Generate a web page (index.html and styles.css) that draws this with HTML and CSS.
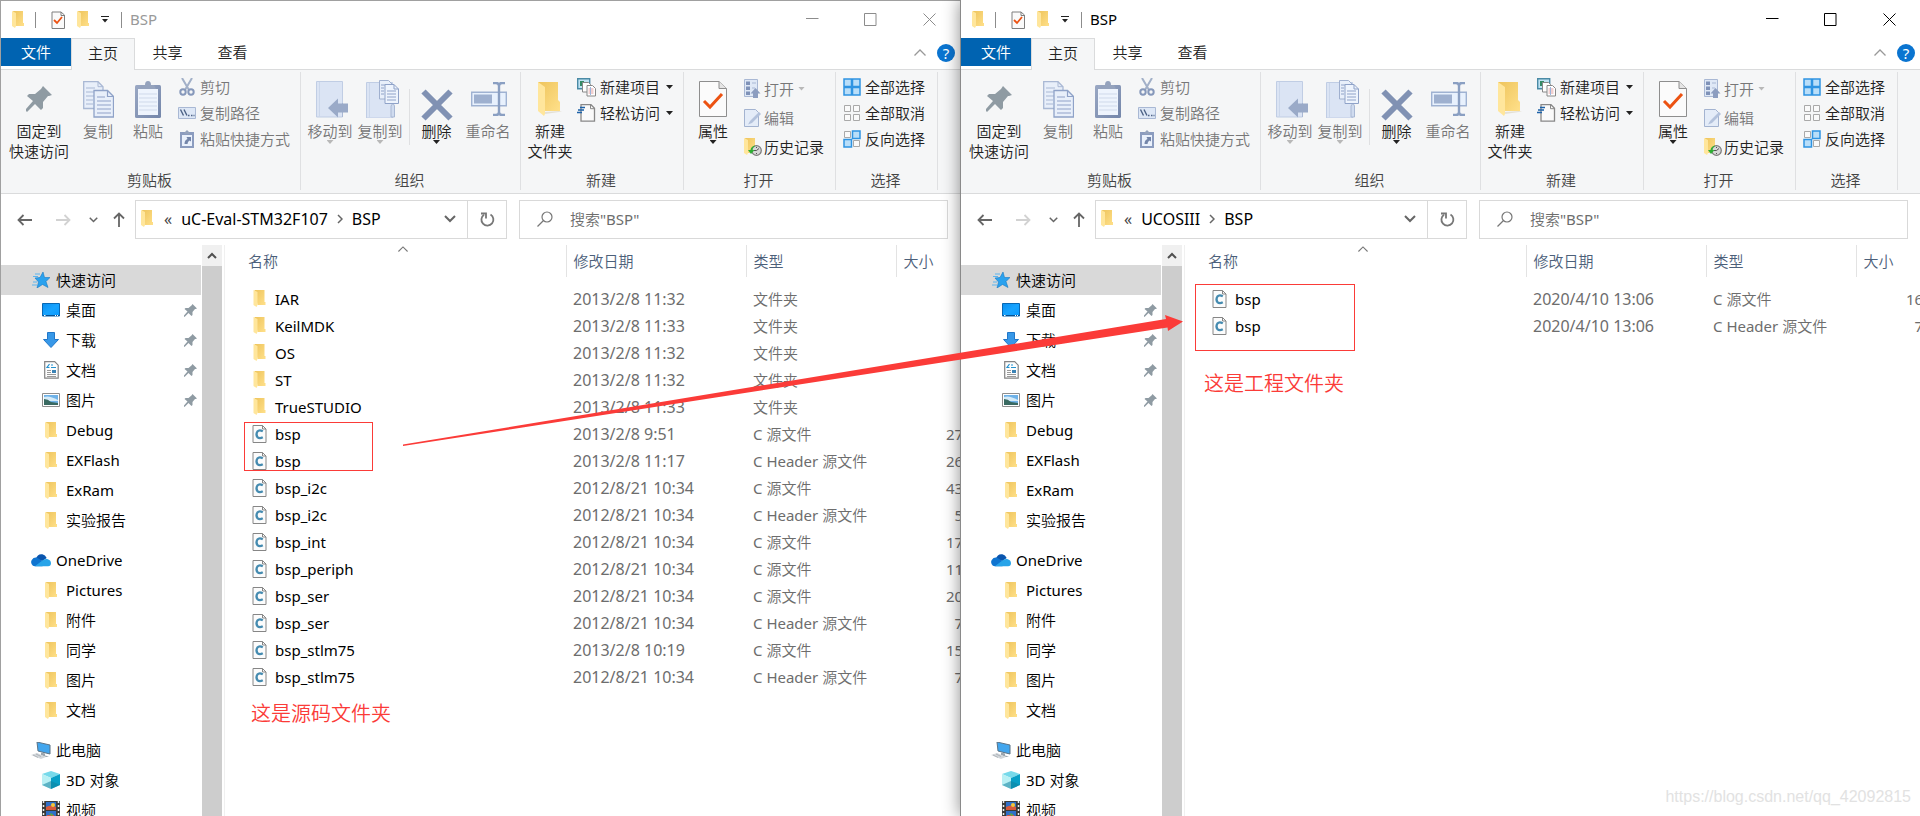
FILE: index.html
```html
<!DOCTYPE html>
<html lang="zh-CN">
<head>
<meta charset="utf-8">
<title>BSP</title>
<link rel="stylesheet" href="styles.css">
</head>
<body>
<svg class="sprite" aria-hidden="true">
  <defs>
    <linearGradient id="gold" x1="0" x2="1" y1="0" y2="1"><stop offset="0" stop-color="#eec45c"/><stop offset="1" stop-color="#ffe08a"/></linearGradient>
    <linearGradient id="sky" x1="0" x2="1" y1="0" y2="1"><stop offset="0" stop-color="#0a8ff0"/><stop offset=".5" stop-color="#18a4ff"/><stop offset="1" stop-color="#0a9aff"/></linearGradient>
    <linearGradient id="slate" x1="0" x2="1" y1="0" y2="1"><stop offset="0" stop-color="#9aa8c4"/><stop offset="1" stop-color="#7486aa"/></linearGradient>
  </defs>
  <symbol id="folder" viewBox="0 0 12 17"><path d="M1 0h10v12l1 0v3H4z" fill="url(#gold)"/><path d="M0 0l4 2v13l-1 2-3-2z" fill="#ffe69c"/></symbol>
  <symbol id="folder-big" viewBox="0 0 26 36"><path d="M1 1h20v18l2 2v9H8z" fill="url(#gold)"/><path d="M1 1l7 5v27l-1 2-6-5z" fill="#ffe69c"/><path d="M8 33l14-2 3-1h-2l-15 1z" fill="#e4e0d4"/></symbol>
  <symbol id="check-doc" viewBox="0 0 28 36"><path d="M.5.5H20l7.500 7V35.500H.5z" fill="#fbfbfb" stroke="#8e8e8e"/><path d="M20 .5v7h7.500" fill="#e4e4e4" stroke="#8e8e8e"/><path d="M5 20l6 6 12-13" fill="none" stroke="#ec5212" stroke-width="3"/></symbol>
  <symbol id="check-doc-small" viewBox="0 0 14 18"><path d="M1 1h9l3.500 3v13.500H1z" fill="#fafafa" stroke="#7e7e7e" stroke-width="1"/><path d="M10 1v3.500h3.500" fill="none" stroke="#7e7e7e"/><path d="M3 9l3 3 5-6" fill="none" stroke="#ec5212" stroke-width="1.800"/></symbol>
  <symbol id="qat-drop" viewBox="0 0 8 7"><path d="M0 .5h8" stroke="#222"/><path d="M1 3h6L4 6.500z" fill="#222"/></symbol>
  <symbol id="min" viewBox="0 0 13 13"><path d="M0 5.500h12.500" stroke="currentColor"/></symbol>
  <symbol id="max" viewBox="0 0 13 13"><path d="M.5.500h11.500v12H.5z" fill="none" stroke="currentColor"/></symbol>
  <symbol id="close" viewBox="0 0 13 13"><path d="M.5.500l12 12M12.500.500l-12 12" stroke="currentColor"/></symbol>
  <symbol id="chev-up" viewBox="0 0 12 7"><path d="M.5 6.500L6 1l5.500 5.500" fill="none" stroke="currentColor" stroke-width="1.300"/></symbol>
  <symbol id="scroll-up" viewBox="0 0 10 7"><path d="M1 6l4-4 4 4" fill="none" stroke="currentColor" stroke-width="2"/></symbol>
  <symbol id="chev-down" viewBox="0 0 12 8"><path d="M1 1l5 5 5-5" fill="none" stroke="currentColor" stroke-width="2"/></symbol>
  <symbol id="chev-right" viewBox="0 0 6 10"><path d="M1 1l4 4-4 4" fill="none" stroke="currentColor" stroke-width="1.500"/></symbol>
  <symbol id="back" viewBox="0 0 15 12"><path d="M15 6H1.500M6.500 1l-5 5 5 5" fill="none" stroke="currentColor" stroke-width="1.800"/></symbol>
  <symbol id="forward" viewBox="0 0 15 12"><path d="M0 6h13.500M8.500 1l5 5-5 5" fill="none" stroke="currentColor" stroke-width="1.800"/></symbol>
  <symbol id="up" viewBox="0 0 12 15"><path d="M6 15V1.500M1 6.500l5-5 5 5" fill="none" stroke="currentColor" stroke-width="1.800"/></symbol>
  <symbol id="refresh" viewBox="0 0 15 15"><path d="M10.500 2.500A6 6 0 1 1 4 2.700" fill="none" stroke="#777" stroke-width="1.800"/><path d="M1 1.500h5v5" fill="none" stroke="#777" stroke-width="1.800"/></symbol>
  <symbol id="search" viewBox="0 0 16 16"><circle cx="10" cy="6" r="5" fill="none" stroke="#777" stroke-width="1.200"/><path d="M6.500 9.500L.5 15.500" stroke="#777" stroke-width="1.300"/></symbol>
  <symbol id="pin" viewBox="0 0 26 26"><path d="M17 0l9 9-3 1-1 0-5 6 0 6-2 2-6-6-8 8-1-1 0-2 7-8-6-5 2-2h6l6-5z" fill="#8f9ba3"/></symbol>
  <symbol id="copy" viewBox="0 0 31 37"><path d="M.7.700H15l5 5V27.500H.7z" fill="#e8effa" stroke="#a9b8d4" stroke-width="1.300"/><path d="M15 .7v5h5M3 7h9M3 11h9M3 15h9M3 19h7M3 23h7" fill="none" stroke="#a9b8d4"/><path d="M11 9.500h13.500l6 6V36H11z" fill="#e8effa" stroke="#8fa2c8" stroke-width="1.300"/><path d="M24.500 9.500v6h6M14 16h8M14 20h14M14 24h14M14 28h14M14 32h14" fill="none" stroke="#8fa2c8" stroke-width="1.200"/></symbol>
  <symbol id="paste" viewBox="0 0 26 37"><rect y="4" width="26" height="33" rx="1.500" fill="url(#slate)"/><path d="M3 8h20v26H3z" fill="#eef4fd"/><path d="M4 13h18M4 17h18M4 21h18M4 25h18M4 29h18" stroke="#cfd9ea"/><path d="M5 8l2-4h3q0-4 3-4t3 4h3l2 4z" fill="#95a3bd"/></symbol>
  <symbol id="cut" viewBox="0 0 16 18"><path d="M3 0l7 12M13 0L6 12" stroke="#a2b0c8" stroke-width="2"/><circle cx="4" cy="14" r="2.700" fill="none" stroke="#8698bb" stroke-width="2"/><circle cx="12" cy="14" r="2.700" fill="none" stroke="#8698bb" stroke-width="2"/></symbol>
  <symbol id="path" viewBox="0 0 18 12"><path d="M.5.500h17v11H.5z" fill="#dde7f6" stroke="#a9b8d4"/><path d="M2.500 2.500l3 6M6 2.500l3 6" stroke="#4d6286" stroke-width="1.400"/><path d="M10 8.500h1.500M13 8.500h1.500M15.500 8.500h1" stroke="#4d6286" stroke-width="1.500"/></symbol>
  <symbol id="shortcut" viewBox="0 0 14 18"><rect y="2" width="14" height="16" fill="#8b9cbf"/><path d="M2 5h10v11H2z" fill="#eaf1fc"/><path d="M4 4l1-2 2-2 2 2 1 2z" fill="#95a3bd"/><path d="M4.500 14q0-4 3-5l-1-2h4.500v4.500l-1.500-1q-2 1-2 3.500z" fill="#7486aa"/></symbol>
  <symbol id="move" viewBox="0 0 32 37"><path d="M.5.500h26V36H.5z" fill="#dbe4f4" stroke="#c0cde4"/><path d="M3.500 1v35" stroke="#cbd7eb"/><path d="M26.500 22v14" stroke="#a9b8d4"/><path d="M12 27l10-9.500v5h10v9H22v5z" fill="#9aaac8"/></symbol>
  <symbol id="copy-to" viewBox="0 0 33 38"><path d="M.5 2.500h26V38H.5z" fill="#dbe4f4" stroke="#c0cde4"/><path d="M3.500 3v35" stroke="#cbd7eb"/><path d="M25 37V26l2-3 1.500 3v11z" fill="#cfdbef" stroke="#a9b8d4"/><path d="M13.500.500h9l4 4V19h-13z" fill="#e8effa" stroke="#a0b0cf"/><path d="M19 4.500h9l4.500 4.500v14.500H19z" fill="#eef4fd" stroke="#8fa2c8"/><path d="M28 4.500V9h4.500M21 11h9M21 14h9M21 17h9M21 20h9M15 5h4M15 8h3M15 11h3M15 14h3" fill="none" stroke="#8fa2c8"/></symbol>
  <symbol id="delete" viewBox="0 0 32 32"><path d="M2.500 2.500l27 27M29.500 2.500l-27 27" stroke="#8091b3" stroke-width="6"/></symbol>
  <symbol id="rename" viewBox="0 0 36 34"><path d="M.7 10.200h34.600v13.600H.7z" fill="#e8f1fd" stroke="#9fb2d2" stroke-width="1.400"/><path d="M3 12.500h18v9H3z" fill="#9eb0cf"/><path d="M22 1h3q3 0 3 3v26q0 3-3 3h-3M34 1h-3q-3 0-3 3M34 33h-3q-3 0-3-3" fill="none" stroke="#8a9fc2" stroke-width="2.400"/></symbol>
  <symbol id="new-item" viewBox="0 0 19 19"><path d="M.7.700h12v10H.7z" fill="#bfe3f3" stroke="#4a8aa5" stroke-width="1.400"/><path d="M3 3h4v5H3z" fill="#348a66"/><path d="M5.500 4.500h6l2 2V14h-8z" fill="#fff" stroke="#888"/><path d="M10 7.500h5.500l3 3v7.500H10z" fill="#fff" stroke="#888"/><path d="M11.500 11h5M11.500 13h5M11.500 15h5" stroke="#e5a0a0"/><path d="M13.500 9v8" stroke="#9bb6dd"/></symbol>
  <symbol id="easy" viewBox="0 0 19 18"><path d="M4 .7h10l3.500 3.500v13H4z" fill="#fafafa" stroke="#888" stroke-width="1.300"/><path d="M13.500.700v4h4" fill="none" stroke="#888"/><path d="M3 3.500h5M1 6h6M0 8.500h5" stroke="#1d62a8" stroke-width="1.300"/></symbol>
  <symbol id="open" viewBox="0 0 17 19"><path d="M.5.500h13v17H.5z" fill="#dfe8f6" stroke="#a9b8d4"/><path d="M2 2.500h4v3.500H2zM2 7.500h4V11H2zM2 12.500h4V16H2z" fill="#7f92b8"/><path d="M8 4h4M8 9h3" stroke="#a9b8d4"/><path d="M11.500 9l5 5.500h-2.500V19h-5v-4.500H6.500z" fill="#8c9dc0"/></symbol>
  <symbol id="edit" viewBox="0 0 17 18"><path d="M.5.500h11l3 3v14H.5z" fill="#e4ecf8" stroke="#a3b3d0"/><path d="M15 3L6 12l-2 3.500L8 14l9-9z" fill="#b3c2dc"/></symbol>
  <symbol id="history" viewBox="0 0 18 18"><path d="M1 0h10v15H4z" fill="url(#gold)"/><path d="M0 0l4 2v13l-1 2-3-2z" fill="#ffe69c"/><circle cx="12.500" cy="12.500" r="4.800" fill="#d6d6d6" stroke="#7a7a7a" stroke-width="1.200"/><path d="M12.500 12.500l2.500-2M12.500 12.500h-2.500M12.500 9v1M12.500 15v1" stroke="#555"/><path d="M4 12h2.500q.5-4 5-4.500-3 2-3 4.500h2L7 16z" fill="#2eae34"/></symbol>
  <symbol id="select-all" viewBox="0 0 18 18"><path d="M1 1h7.500v7.500H1zM9.500 1H17v7.500H9.500zM1 9.500h7.500V17H1zM9.500 9.500H17V17H9.500z" fill="#b9def9" stroke="#2f94e2" stroke-width="1.500"/></symbol>
  <symbol id="select-none" viewBox="0 0 18 18"><path d="M1.500 1.500h6v6h-6zM10.500 1.500h6v6h-6zM1.500 10.500h6v6h-6zM10.500 10.500h6v6h-6z" fill="#fafafa" stroke="#a9a9a9"/></symbol>
  <symbol id="select-inv" viewBox="0 0 18 18"><path d="M1.500 1.500h6v6h-6zM10.500 10.500h6v6h-6z" fill="#fafafa" stroke="#a9a9a9"/><path d="M9.500 1h7.500v7.500H9.500zM1 9.500h7.500V17H1z" fill="#b9def9" stroke="#2f94e2" stroke-width="1.500"/></symbol>
  <symbol id="star" viewBox="0 0 18 16"><path d="M11 0l1.500 5.500 5.500 0-4 4 2 6-5.500-3L5 16l1.500-6L3 6l5-.5z" fill="#2ba2ee" stroke="#1579c4" stroke-width=".6"/><path d="M3 2h5M1 4.500h5M1 10h4M0 13h5" stroke="#5bb5ef"/></symbol>
  <symbol id="screen" viewBox="0 0 18 14"><path d="M.5.500h17v12.500H.5z" fill="url(#sky)" stroke="#0868b4"/><path d="M1 12.500h16" stroke="#07508f"/><path d="M2 12.500h1.500M13 12.500h1M15 12.500h1" stroke="#fff"/></symbol>
  <symbol id="download" viewBox="0 0 16 16"><path d="M4.500.500h7V7.500h4L8 15.500.5 7.500h4z" fill="#3798e8" stroke="#2277c8"/></symbol>
  <symbol id="document" viewBox="0 0 15 18"><path d="M.7.700h10l3.500 3.500v13H.7z" fill="#fdfdfd" stroke="#848484" stroke-width="1.200"/><path d="M5.500 3L3 6.500h2.500M7 4h2M7 6.500h5" fill="none" stroke="#2492cf" stroke-width="1.200"/><path d="M3 9.500h4M3 11.500h4M3 13.500h9M3 15.500h9" stroke="#999"/><path d="M8 9h4v3H8z" fill="#3c83b5"/></symbol>
  <symbol id="picture" viewBox="0 0 18 14"><path d="M.5.500h17v13H.5z" fill="#fff" stroke="#8e8e8e"/><path d="M2 2h14v10H2z" fill="#6fb2e8"/><path d="M2 4q5-2 14 3v1H2z" fill="#d5ebf8"/><path d="M2 6q4 0 7 3l7 1v2H2z" fill="#3a6a62"/></symbol>
  <symbol id="cloud" viewBox="0 0 21 14"><path d="M5 6Q7 0 12 1q3 .5 4.500 4L12 8z" fill="#0a55ae"/><path d="M2 13Q-1 10 .8 7T6 4.500L15 10l-3 3.500H4z" fill="#0f74d0"/><path d="M4 13.500L12 7.500q2-2 5-1.500 4 1 4 4.500t-4 3z" fill="#28a4e9"/></symbol>
  <symbol id="pc" viewBox="0 0 20 17"><path d="M6 0l13 3v9L7 9z" fill="#42a6ee" stroke="#5b7386"/><path d="M10 10.500l4 1v2l4 1-3 .5-5-2z" fill="#9aa5ad"/><path d="M0 13l6-2 9 4-5 2z" fill="#d2d7db"/><path d="M2 13l5 2.500M5 12l5 2.500" stroke="#9da5ab" stroke-width=".7"/></symbol>
  <symbol id="cube" viewBox="0 0 18 18"><path d="M9 0l9 3-9 4-9-4z" fill="#77d9ea"/><path d="M0 3l9 4v11l-9-4z" fill="#b8f0f4"/><path d="M18 3L9 7v11l9-4z" fill="#089fc6"/><path d="M9 10l9 4-9 4-9-4z" fill="#10829f" opacity=".55"/></symbol>
  <symbol id="film" viewBox="0 0 18 18"><path d="M0 0h18v18H0z" fill="#3a3a3a"/><path d="M4 1h10v8H4zM4 10h10v8H4z" fill="#2f6fc8"/><path d="M4 6q5-3 10 0v3H4zM5 14h7v4H5z" fill="#d7593c"/><circle cx="11" cy="4" r="2" fill="#f5c637"/><path d="M7 12l4 1-1 3z" fill="#5ca84a"/><path d="M1.500 0v18M16.500 0v18" stroke="#eee" stroke-width="1.500" stroke-dasharray="2 2"/></symbol>
  <symbol id="c-file" viewBox="0 0 14 18"><path d="M.5.500H10L13.500 4v13.500H.5z" fill="#fcfcfc" stroke="#868686"/><path d="M10 .5V4h3.500" fill="none" stroke="#868686"/><path d="M10.300 6.400Q7 4.100 4.900 6.500 3 9.500 4.900 12.100 7 14.200 10.300 12.300" fill="none" stroke="#458bb0" stroke-width="2.200"/></symbol>
</svg>

<main class="workspace" id="workspace"></main>

<div class="notes">
  <div class="frame frame-source"></div>
  <div class="frame frame-target"></div>
  <p class="note note-source">这是源码文件夹</p>
  <p class="note note-target">这是工程文件夹</p>
  <svg class="arrow" viewBox="0 0 780 132" aria-hidden="true"><path d="M0 129.500L763 4 762 0 780 6.500 765 16 764.500 12.500 0 131z" fill="#fb3b38"/></svg>
  <p class="watermark">https://blog.csdn.net/qq_42092815</p>
</div>
<script src="explorer.js"></script>
</body>
</html>
```

FILE: styles.css
```css
* { box-sizing: border-box; }

body {
  margin: 0;
  height: 100vh;
  overflow: hidden;
  position: relative;
  background: #fff;
  color: #000;
  font: 15px/20px "Noto Sans", "Noto Sans CJK SC DemiLight", "Noto Sans CJK SC", sans-serif;
}

button, input {
  margin: 0;
  padding: 0;
  border: 0;
  background: none;
  color: inherit;
  font: inherit;
}

p, ul { margin: 0; padding: 0; list-style: none; }
a { color: inherit; text-decoration: none; }
svg { display: block; flex: none; }
.sprite { position: absolute; width: 0; height: 0; }

.workspace {
  display: grid;
  grid-template-columns: 1fr 1fr;
  grid-template-rows: 100%;
  height: 100%;
}

.window {
  display: flex;
  flex-direction: column;
  min-width: 0;
  min-height: 0;
  background: #fff;
  border-left: 1px solid #a0a0a0;
}
.window.inactive { border-top: 1px solid #a0a0a0; }
.window.active {
  position: relative;
  border-color: #8a8a8a;
  padding-top: 1px;
  box-shadow: 0 0 16px rgba(0, 0, 0, .45);
}
.clip { overflow: hidden; display: flex; flex-direction: column; flex: 1; min-height: 0; }

/* Title bar */
.titlebar {
  display: flex;
  align-items: center;
  height: 37px;
  padding-left: 11px;
  flex: none;
}
.titlebar .bar { width: 1px; height: 16px; background: #8c8c8c; }
.titlebar .bar-first { margin: 0 15px 0 11px; }
.titlebar .qat { display: flex; align-items: center; gap: 12px; margin-right: 12px; }
.titlebar .caption { margin-left: 8px; padding-bottom: 1px; }
.inactive .caption { color: #999; }
.controls { margin-left: auto; display: flex; }
.controls button { width: 58px; height: 30px; display: grid; place-items: center; }
.controls button:last-child { width: 61px; }
.inactive .controls { color: #8c8c8c; }

/* Tabs */
.tabs {
  display: flex;
  height: 32px;
  flex: none;
  border-bottom: 1px solid #dadbdc;
  color: #222;
}
.tabs button { width: 65px; height: 30px; padding-bottom: 2px; }
.tabs .file { width: 70px; height: 28px; padding-bottom: 0; background: #0063b1; color: #fff; }
.tabs .current {
  width: 64px;
  height: 32px;
  padding-bottom: 4px;
  background: #f5f6f7;
  border: 1px solid #dadbdc;
  border-bottom: 0;
}
.tabs .tools { margin-left: auto; display: flex; align-items: center; color: #999; padding: 0 5px 2px 0; gap: 11px; }
.tabs .tools button { width: auto; height: auto; padding: 0; }
.tabs .tools .help {
  width: 18px;
  height: 18px;
  border-radius: 9px;
  background: #0a74d0;
  color: #fff;
  line-height: 18px;
}

/* Ribbon */
.ribbon {
  display: flex;
  height: 124px;
  flex: none;
  padding-top: 2px;
  background: #f5f6f7;
  border-bottom: 1px solid #dadbdc;
  color: #222;
}
.group {
  display: flex;
  flex-direction: column;
  height: 118px;
  border-right: 1px solid #dfe0e2;
}
.group-body { display: flex; height: 98px; padding: 5px 0 0 4px; }
.group-name { text-align: center; color: #444; padding-right: 2px; }
.clipboard { width: 300px; }
.organize { width: 220px; }
.create { width: 163px; }
.opening { width: 152px; }
.selecting { width: 102px; }

.big {
  display: flex;
  flex-direction: column;
  align-items: center;
  height: 84px;
  width: 50px;
}
.big .pic { height: 44px; display: grid; place-items: center; }
.big .drop { margin-top: -1px; }
.pin-button { width: 68px; }
.organize .dim .pic { padding-left: 4px; }
.organize .rename-button .pic { padding-left: 2px; }
.delete-button { width: 54px; border-left: 1px solid #dfe0e2; height: 56px; margin: 12px 0 0 4px; }
.delete-button .pic { height: 32px; }
.dim { color: #777; }

.small-list { display: flex; flex-direction: column; margin-top: -3px; }
.small {
  display: flex;
  align-items: center;
  gap: 4px;
  height: 26px;
  white-space: nowrap;
}
.small .pic { width: 19px; display: grid; place-items: center; }
.small .drop { margin-left: 2px; }
.small-list.wide .small { height: 29px; gap: 2px; }
.clipboard .small-list { margin-left: 4px; }
.create .small-list { margin-left: 2px; }
.opening .small-list { margin-left: 5px; }
.selecting .small-list { margin-left: 2px; }
.drop { width: 7px; height: 4px; background: currentColor; clip-path: polygon(0 0, 100% 0, 50% 100%); }
.dim .drop { background: #b8b8b8; }

/* Address row */
.address-row {
  display: flex;
  align-items: center;
  height: 51px;
  flex: none;
  padding: 0 12px 0 16px;
  color: #666;
}
.nav { display: flex; align-items: center; width: 118px; }
.nav .back { margin-right: 24px; }
.nav .forward { margin-right: 18px; color: #d2d2d2; }
.nav .recent { margin-right: 15px; }
.address {
  display: flex;
  align-items: stretch;
  width: 372px;
  height: 39px;
  border: 1px solid #d9d9d9;
}
.crumbs { display: flex; align-items: center; flex: 1; padding: 0 11px 2px 5px; gap: 9px; font-size: 16px; }
.crumbs a { color: #000; }
.crumbs .more { margin-left: 2px; color: #444; }
.crumbs .history { margin-left: auto; }
.address .reload { width: 39px; border-left: 1px solid #d9d9d9; display: grid; place-items: center; }
.search {
  flex: 1;
  display: flex;
  align-items: center;
  gap: 17px;
  height: 39px;
  margin-left: 12px;
  padding: 0 0 2px 17px;
  border: 1px solid #d9d9d9;
}
.search input { flex: 1; min-width: 0; outline: 0; }
.search input::placeholder { color: #6d6d6d; opacity: 1; }

/* Panes */
.panes { display: flex; flex: 1; min-height: 0; }
.sidebar { width: 200px; flex: none; padding-top: 20px; overflow: hidden; }
.sidebar ul + ul { margin-top: 10px; }
.sidebar a {
  display: flex;
  align-items: center;
  height: 30px;
  padding: 0 4px 0 41px;
  gap: 6px;
}
.sidebar .root a { padding-left: 30px; gap: 5px; }
.sidebar .selected { background: #d9d9d9; }
.sidebar .pic { width: 18px; display: grid; place-items: center; }
.sidebar .root .pic { width: 20px; }
.sidebar .pinned { margin-left: auto; }
.scroll { width: 20px; flex: none; margin-left: 1px; background: #cdcdcd; }
.scroll button { display: grid; place-items: center; width: 20px; height: 21px; background: #f0f0f0; color: #505050; }
.files { flex: 1; min-width: 0; overflow: hidden; margin-left: 2px; border-left: 1px solid #f0f0f0; position: relative; }
.files table { width: 767px; table-layout: fixed; border-collapse: collapse; }
.files th { height: 32px; padding: 0 0 0 7px; text-align: left; font-weight: 400; color: #4c607a; border-right: 1px solid #e3e3e3; }
.files th:first-child { padding-left: 23px; }
.files th:last-child { border: 0; }
.files td { height: 27px; padding: 0 0 0 7px; color: #6d6d6d; white-space: nowrap; }
.files td:nth-child(2) { font-size: 16px; }
.files td:last-child { text-align: right; padding-right: 6px; }
.files tbody::before { content: ""; display: block; height: 8px; }
.files .name { display: flex; align-items: center; gap: 8px; padding-left: 20px; color: #000; }
.files .name svg { width: 15px; }
.col-name { width: 341px; }
.col-date { width: 180px; }
.col-type { width: 150px; }
.sort { position: absolute; left: 173px; top: 1px; color: #777; }

/* Annotations drawn over both windows */
.notes { position: absolute; inset: 0; pointer-events: none; color: #fb3b38; }
.frame { position: absolute; border: 1px solid #fb3b38; }
.frame-source { left: 244px; top: 422px; width: 129px; height: 49px; }
.frame-target { left: 1195px; top: 284px; width: 160px; height: 67px; }
.note { position: absolute; font-size: 20px; line-height: 28px; }
.note-source { left: 251px; top: 700px; }
.note-target { left: 1204px; top: 370px; }
.arrow { position: absolute; left: 403px; top: 315px; width: 780px; height: 132px; }
.watermark {
  position: absolute;
  right: 9px;
  bottom: 9px;
  color: #e2e2e2;
  font: 16px/20px "Liberation Sans", sans-serif;
}
```

FILE: explorer.js
```js
const icon = (id, w, h) => `<svg width="${w}" height="${h}" aria-hidden="true"><use href="#${id}"/></svg>`;
const pic = (id, w, h) => `<span class="pic">${icon(id, w, h)}</span>`;
const drop = '<span class="drop"></span>';

const big = (cls, id, w, h, label, hasDrop) =>
  `<button class="big ${cls}">${pic(id, w, h)}<span>${label}</span>${hasDrop ? drop : ''}</button>`;
const small = (cls, id, w, h, label, hasDrop) =>
  `<button class="small ${cls}">${pic(id, w, h)}<span>${label}</span>${hasDrop ? drop : ''}</button>`;
const group = (cls, name, body) =>
  `<section class="group ${cls}"><div class="group-body">${body}</div><div class="group-name">${name}</div></section>`;

const ribbon = [
  group('clipboard', '剪贴板',
    big('pin-button', 'pin', 26, 26, '固定到<br>快速访问') +
    big('dim', 'copy', 31, 37, '复制') +
    big('dim', 'paste', 26, 37, '粘贴') +
    `<div class="small-list">${small('dim', 'cut', 16, 18, '剪切')}${small('dim', 'path', 18, 12, '复制路径')}${small('dim', 'shortcut', 14, 18, '粘贴快捷方式')}</div>`),
  group('organize', '组织',
    big('dim', 'move', 32, 37, '移动到', true) +
    big('dim', 'copy-to', 33, 38, '复制到', true) +
    big('delete-button', 'delete', 32, 32, '删除', true) +
    big('rename-button dim', 'rename', 36, 34, '重命名')),
  group('create', '新建',
    big('', 'folder-big', 26, 36, '新建<br>文件夹') +
    `<div class="small-list">${small('', 'new-item', 19, 19, '新建项目', true)}${small('', 'easy', 19, 18, '轻松访问', true)}</div>`),
  group('opening', '打开',
    big('', 'check-doc', 28, 36, '属性', true) +
    `<div class="small-list wide">${small('dim', 'open', 17, 19, '打开', true)}${small('dim', 'edit', 17, 18, '编辑')}${small('', 'history', 18, 18, '历史记录')}</div>`),
  group('selecting', '选择',
    `<div class="small-list">${small('', 'select-all', 18, 18, '全部选择')}${small('', 'select-none', 18, 18, '全部取消')}${small('', 'select-inv', 18, 18, '反向选择')}</div>`)
].join('');

const folder = label => ['folder', 12, 17, label];
const tree = [
  [['star', 18, 16, '快速访问'], ['screen', 18, 14, '桌面', true], ['download', 16, 16, '下载', true],
   ['document', 15, 18, '文档', true], ['picture', 18, 14, '图片', true],
   folder('Debug'), folder('EXFlash'), folder('ExRam'), folder('实验报告')],
  [['cloud', 20, 14, 'OneDrive'], folder('Pictures'), folder('附件'), folder('同学'), folder('图片'), folder('文档')],
  [['pc', 20, 17, '此电脑'], ['cube', 18, 18, '3D 对象'], ['film', 18, 18, '视频']]
];

const sidebar = tree.map((items, g) => '<ul>' + items.map(([id, w, h, label, pinned], i) =>
  `<li${i === 0 ? ' class="root"' : ''}><a href="#"${g + i === 0 ? ' class="selected"' : ''}>${pic(id, w, h)}<span>${label}</span>${pinned ? `<span class="pinned">${icon('pin', 13, 13)}</span>` : ''}</a></li>`
).join('') + '</ul>').join('');

const C = 'C 源文件';
const H = 'C Header 源文件';
const D = '文件夹';
const windows = [
  { state: 'inactive', parent: 'uC-Eval-STM32F107', files: [
    ['IAR', '2013/2/8 11:32', D, ''], ['KeilMDK', '2013/2/8 11:33', D, ''], ['OS', '2013/2/8 11:32', D, ''],
    ['ST', '2013/2/8 11:32', D, ''], ['TrueSTUDIO', '2013/2/8 11:33', D, ''],
    ['bsp', '2013/2/8 9:51', C, '27 KB'], ['bsp', '2013/2/8 11:17', H, '26 KB'],
    ['bsp_i2c', '2012/8/21 10:34', C, '43 KB'], ['bsp_i2c', '2012/8/21 10:34', H, '5 KB'],
    ['bsp_int', '2012/8/21 10:34', C, '17 KB'], ['bsp_periph', '2012/8/21 10:34', C, '11 KB'],
    ['bsp_ser', '2012/8/21 10:34', C, '20 KB'], ['bsp_ser', '2012/8/21 10:34', H, '7 KB'],
    ['bsp_stlm75', '2013/2/8 10:19', C, '15 KB'], ['bsp_stlm75', '2012/8/21 10:34', H, '7 KB']] },
  { state: 'active', parent: 'UCOSIII', files: [
    ['bsp', '2020/4/10 13:06', C, '16 KB'], ['bsp', '2020/4/10 13:06', H, '7 KB']] }
];

const row = ([name, date, type, size]) =>
  `<tr><td><span class="name">${type === D ? icon('folder', 12, 17) : icon('c-file', 14, 18)}<span>${name}</span></span></td><td>${date}</td><td>${type}</td><td>${size}</td></tr>`;

document.getElementById('workspace').innerHTML = windows.map(w => `
<section class="window ${w.state}"><div class="clip">
  <header class="titlebar">
    ${icon('folder', 12, 17)}<span class="bar bar-first"></span>
    <span class="qat">${icon('check-doc-small', 14, 18)}${icon('folder', 12, 17)}${icon('qat-drop', 8, 7)}</span>
    <span class="bar"></span><span class="caption">BSP</span>
    <div class="controls">
      <button aria-label="最小化">${icon('min', 13, 13)}</button>
      <button aria-label="最大化">${icon('max', 13, 13)}</button>
      <button aria-label="关闭">${icon('close', 13, 13)}</button>
    </div>
  </header>
  <nav class="tabs">
    <button class="file">文件</button><button class="current">主页</button><button>共享</button><button>查看</button>
    <div class="tools"><button aria-label="折叠功能区">${icon('chev-up', 12, 7)}</button><button class="help">?</button></div>
  </nav>
  <div class="ribbon">${ribbon}</div>
  <div class="address-row">
    <div class="nav">
      <button class="back" aria-label="后退">${icon('back', 15, 12)}</button>
      <button class="forward" aria-label="前进">${icon('forward', 15, 12)}</button>
      <button class="recent" aria-label="最近位置">${icon('chev-down', 9, 6)}</button>
      <button aria-label="上移">${icon('up', 12, 15)}</button>
    </div>
    <div class="address">
      <div class="crumbs">${icon('folder', 12, 17)}<span class="more">«</span><a href="#">${w.parent}</a>${icon('chev-right', 6, 10)}<a href="#">BSP</a>
        <button class="history" aria-label="以前的位置">${icon('chev-down', 12, 8)}</button></div>
      <button class="reload" aria-label="刷新">${icon('refresh', 15, 15)}</button>
    </div>
    <label class="search">${icon('search', 16, 16)}<input type="text" placeholder='搜索"BSP"' aria-label="搜索"></label>
  </div>
  <div class="panes">
    <nav class="sidebar">${sidebar}</nav>
    <div class="scroll"><button aria-label="向上滚动">${icon('scroll-up', 10, 7)}</button></div>
    <div class="files">
      <span class="sort">${icon('chev-up', 10, 6)}</span>
      <table>
        <colgroup><col class="col-name"><col class="col-date"><col class="col-type"><col></colgroup>
        <thead><tr><th>名称</th><th>修改日期</th><th>类型</th><th>大小</th></tr></thead>
        <tbody>${w.files.map(row).join('')}</tbody>
      </table>
    </div>
  </div>
</div></section>`).join('');
```
